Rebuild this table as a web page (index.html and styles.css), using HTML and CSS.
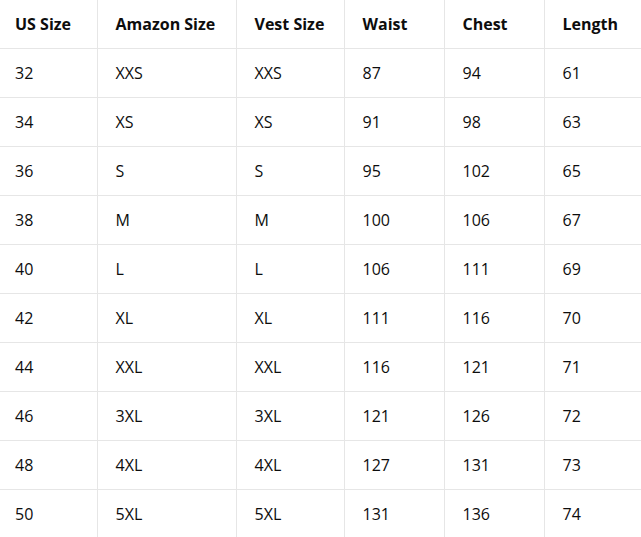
FILE: index.html
```html
<!DOCTYPE html>
<html lang="en">
<head>
<meta charset="utf-8">
<title>Size Chart</title>
<link rel="stylesheet" href="styles.css">
</head>
<body>
<table class="size-table">
  <thead>
    <tr><th>US Size</th><th>Amazon Size</th><th>Vest Size</th><th>Waist</th><th>Chest</th><th>Length</th></tr>
  </thead>
  <tbody>
    <tr><td>32</td><td>XXS</td><td>XXS</td><td>87</td><td>94</td><td>61</td></tr>
    <tr><td>34</td><td>XS</td><td>XS</td><td>91</td><td>98</td><td>63</td></tr>
    <tr><td>36</td><td>S</td><td>S</td><td>95</td><td>102</td><td>65</td></tr>
    <tr><td>38</td><td>M</td><td>M</td><td>100</td><td>106</td><td>67</td></tr>
    <tr><td>40</td><td>L</td><td>L</td><td>106</td><td>111</td><td>69</td></tr>
    <tr><td>42</td><td>XL</td><td>XL</td><td>111</td><td>116</td><td>70</td></tr>
    <tr><td>44</td><td>XXL</td><td>XXL</td><td>116</td><td>121</td><td>71</td></tr>
    <tr><td>46</td><td>3XL</td><td>3XL</td><td>121</td><td>126</td><td>72</td></tr>
    <tr><td>48</td><td>4XL</td><td>4XL</td><td>127</td><td>131</td><td>73</td></tr>
    <tr><td>50</td><td>5XL</td><td>5XL</td><td>131</td><td>136</td><td>74</td></tr>
  </tbody>
</table>
</body>
</html>
```
FILE: styles.css
```css
html, body {
  margin: 0;
  padding: 0;
  background: #ffffff;
}
body {
  font-family: "Open Sans", "Noto Sans", "Liberation Sans", sans-serif;
  font-size: 16px;
  color: #0d0d0d;
}
.size-table {
  border-collapse: collapse;
  table-layout: fixed;
  width: 641px;
}
.size-table th,
.size-table td {
  height: 48px;
  padding: 0 0 0 18px;
  text-align: left;
  vertical-align: middle;
  border-right: 1px solid #e6e6e6;
  border-bottom: 1px solid #e6e6e6;
  white-space: nowrap;
  box-sizing: border-box;
}
.size-table th {
  font-weight: 700;
  height: 48px;
}
.size-table td {
  font-weight: 400;
  height: 49px;
}
.size-table tr > :last-child { border-right: none; }
.size-table tbody tr:last-child td { border-bottom: none; }
.size-table th:nth-child(1) { width: 97px; padding-left: 15px; }
.size-table td:nth-child(1) { padding-left: 15px; }
.size-table th:nth-child(2) { width: 139px; }
.size-table th:nth-child(3) { width: 108px; }
.size-table th:nth-child(4) { width: 100px; }
.size-table th:nth-child(5) { width: 100px; }
.size-table th:nth-child(6) { width: 97px; }
```
